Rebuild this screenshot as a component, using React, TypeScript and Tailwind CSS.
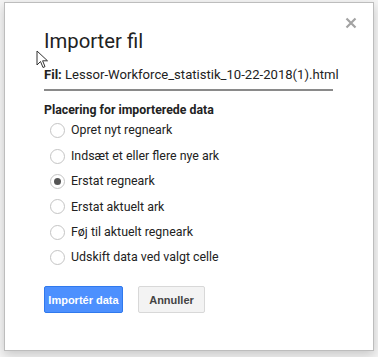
import React from "react";

const options = [
  "Opret nyt regneark",
  "Indsæt et eller flere nye ark",
  "Erstat regneark",
  "Erstat aktuelt ark",
  "Føj til aktuelt regneark",
  "Udskift data ved valgt celle",
];

export default function App() {
  return (
    <div className="w-[378px] h-[357px] bg-[#f4f4f4] relative overflow-hidden" style={{ fontFamily: "Roboto, Arial, sans-serif" }}>
      <div className="absolute left-[4px] top-[2px] w-[370px] h-[349px] bg-white border border-[#bdbdbd] shadow-[0_4px_10px_rgba(0,0,0,0.18)]">
        <div className="relative pl-[39px] pr-[40px] pt-[26px]">
          <button className="absolute right-[16px] top-[14px] text-[#a0a0a0]">
            <svg width="12" height="12" viewBox="0 0 12 12">
              <path d="M1.5 1.5 L10.5 10.5 M10.5 1.5 L1.5 10.5" stroke="#a3a3a3" strokeWidth="2.2" />
            </svg>
          </button>
          <h1 className="text-[20.3px] leading-[24px] text-[#222] font-normal">Importer fil</h1>
          <div className="mt-[14px] text-[13.1px] leading-[16px] text-[#222] pb-[6px] border-b-2 border-[#8a8a8a] w-[289px] whitespace-nowrap">
            <span className="font-bold">Fil:</span> Lessor-Workforce_statistik_10-22-2018(1).html
          </div>
          <div className="mt-[11px] text-[12.3px] leading-[16px] font-bold text-[#222]">Placering for importerede data</div>
          <div className="mt-0 flex flex-col">
            {options.map((o, i) => (
              <div key={o} className="flex items-center h-[25.4px]">
                <span className="ml-[6px] w-[15px] h-[15px] rounded-full border border-[#c4c4c4] bg-white flex items-center justify-center">
                  {i === 2 && <span className="w-[7px] h-[7px] rounded-full bg-[#555]" />}
                </span>
                <span className="ml-[6px] text-[12.4px] text-[#222]">{o}</span>
              </div>
            ))}
          </div>
          <div className="mt-[16px] flex gap-[15px]" style={{ fontFamily: '"Liberation Sans", Arial, sans-serif' }}>
            <button className="w-[79px] h-[27px] rounded-[2px] bg-[#4d90fe] border border-[#3079ed] text-white text-[11px] font-bold">
              Importér data
            </button>
            <button className="w-[67px] h-[27px] rounded-[2px] bg-[#f3f3f3] border border-[#d8d8d8] text-[#444] text-[11px] font-bold">
              Annuller
            </button>
          </div>
        </div>
      </div>
      <svg className="absolute left-[36px] top-[50px]" width="13" height="19" viewBox="0 0 13 19">
        <path d="M1 1 L1 15 L4.5 11.5 L7 17.5 L9 16.6 L6.6 10.8 L11.5 10.8 Z" fill="white" stroke="#333" strokeWidth="1" strokeLinejoin="round" />
      </svg>
    </div>
  );
}
